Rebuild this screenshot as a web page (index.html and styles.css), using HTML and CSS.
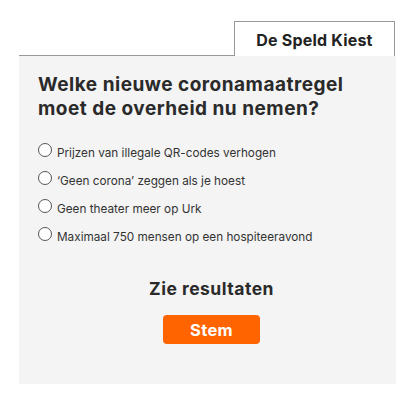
FILE: index.html
```html
<!DOCTYPE html>
<html lang="nl">
<head>
<meta charset="utf-8">
<link rel="stylesheet" href="styles.css">
</head>
<body>
<div class="poll">
  <div class="poll-head">
    <div class="head-line"></div>
    <div class="tab">De Speld Kiest</div>
    <div class="head-gap"></div>
  </div>
  <div class="panel">
    <h2 class="question">Welke nieuwe coronamaatregel moet de overheid nu nemen?</h2>
    <ul class="options">
      <li class="option"><span class="radio"></span><span class="label">Prijzen van illegale QR-codes verhogen</span></li>
      <li class="option"><span class="radio"></span><span class="label">‘Geen corona’ zeggen als je hoest</span></li>
      <li class="option"><span class="radio"></span><span class="label">Geen theater meer op Urk</span></li>
      <li class="option"><span class="radio"></span><span class="label">Maximaal 750 mensen op een hospiteeravond</span></li>
    </ul>
    <div class="results">Zie resultaten</div>
    <div class="actions"><button class="vote">Stem</button></div>
  </div>
</div>
</body>
</html>
```
FILE: styles.css
```css
* { box-sizing: border-box; }
body {
  margin: 0;
  background: #fff;
  font-family: "Inter", "Noto Sans", sans-serif;
  color: #333;
}
.poll {
  margin: 21px 0 0 19px;
  width: 377px;
}
.poll-head {
  display: flex;
  align-items: flex-end;
  height: 35px;
}
.head-line {
  flex: 1;
  border-bottom: 1px solid #999;
}
.tab {
  width: 161px;
  height: 35px;
  border: 1px solid #999;
  border-bottom: none;
  display: flex;
  align-items: center;
  justify-content: center;
  font-weight: 700;
  font-size: 16px;
  letter-spacing: 0.2px;
  color: #222;
  padding-top: 1px;
}
.head-gap { width: 1px; }
.panel {
  background: #f4f4f4;
  height: 328px;
  padding: 17px 11px 0 19px;
}
.question {
  margin: 0;
  width: 330px;
  font-size: 19px;
  line-height: 24px;
  font-weight: 700;
  letter-spacing: 0.5px;
  color: #2a2a2a;
}
.options {
  list-style: none;
  margin: 17px 0 0 0;
  padding: 0;
}
.option {
  display: flex;
  align-items: center;
  height: 28px;
}
.radio {
  width: 14px;
  height: 14px;
  border: 1px solid #555;
  border-radius: 50%;
  background: #fff;
  margin-right: 5px;
  margin-top: -4px;
  flex: none;
}
.label {
  font-size: 11.75px;
  color: #333;
  padding-top: 2px;
}
.results {
  margin-top: 28px;
  text-align: center;
  font-weight: 700;
  font-size: 17.5px;
  letter-spacing: 0.5px;
  color: #2a2a2a;
}
.actions {
  display: flex;
  justify-content: center;
  margin-top: 16px;
}
.vote {
  width: 97px;
  height: 29px;
  border: none;
  border-radius: 4px;
  background: #ff6400;
  color: #fff;
  font-family: "Inter", "Noto Sans", sans-serif;
  font-weight: 700;
  font-size: 16.5px;
  letter-spacing: 0.3px;
  padding: 0;
}
```
